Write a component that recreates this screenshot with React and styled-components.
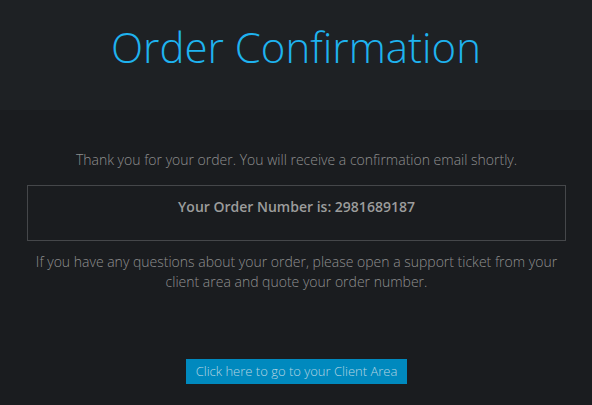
import React from 'react'
import styled, {createGlobalStyle} from 'styled-components'

const GlobalStyle = createGlobalStyle`
body {
  margin: 0;
  background: #1a1c1f;
  font-family: "Open Sans", "Liberation Sans", sans-serif;
}
`;

const Header = styled.header`
background: #1e2124;
height: 110px;
display: flex;
justify-content: center;
padding-top: 18px;
box-sizing: border-box;
`;

const Title = styled.h1`
margin: 0;
font-size: 42px;
font-weight: 300;
line-height: 58px;
color: #1fb3ef;
`;

const Main = styled.main`
padding: 40px 26px 0 27px;
display: flex;
flex-direction: column;
align-items: center;
`;

const Text = styled.p`
margin: 0;
font-size: 14px;
font-weight: 300;
line-height: 20px;
color: #8f8f8f;
text-align: center;
`;

const NumberBox = styled.div`
align-self: stretch;
margin: 15px 0 11px;
height: 56px;
box-sizing: border-box;
border: 1px solid #45474a;
padding-top: 11px;
text-align: center;
font-size: 14px;
font-weight: 600;
color: #9c9c9c;
line-height: 20px;
`;

const Button = styled.a`
margin-top: 67px;
display: inline-block;
background: #0089be;
color: #b3d4e2;
font-size: 13px;
font-weight: 300;
line-height: 25px;
padding: 0 10px;
white-space: nowrap;
text-align: center;
cursor: pointer;
`;

const App = () => {
  return (
    <>
      <GlobalStyle/>
      <Header>
        <Title>Order Confirmation</Title>
      </Header>
      <Main>
        <Text>Thank you for your order. You will receive a confirmation email shortly.</Text>
        <NumberBox>Your Order Number is: 2981689187</NumberBox>
        <Text>If you have any questions about your order, please open a support ticket from your client area and quote your order number.</Text>
        <Button>Click here to go to your Client Area</Button>
      </Main>
    </>
  )
}

export default App
